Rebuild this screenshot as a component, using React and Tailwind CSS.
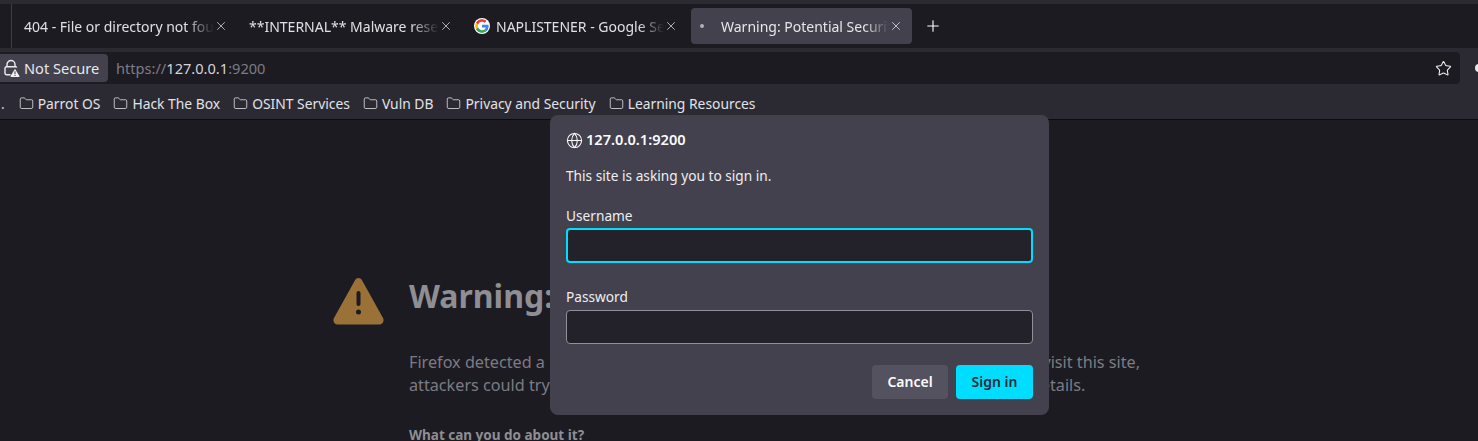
import React from 'react';
import { X, Plus, Star, Folder, Globe } from 'lucide-react';

const fade = '[mask-image:linear-gradient(to_right,black_85%,transparent_100%)]';

const GoogleIcon = () => (
  <svg width="16" height="16" viewBox="0 0 48 48" className="shrink-0 rounded-full bg-white p-px">
    <path fill="#EA4335" d="M24 9.500c3.500 0 6.700 1.200 9.200 3.600l6.900-6.900C35.900 2.400 30.500 0 24 0 14.600 0 6.500 5.400 2.600 13.200l8 6.200C12.500 13.700 17.800 9.500 24 9.500z" />
    <path fill="#4285F4" d="M46.900 24.500c0-1.600-.1-3.100-.4-4.500H24v9h12.900c-.6 3-2.200 5.500-4.700 7.200l7.700 6c4.500-4.200 7-10.300 7-17.700z" />
    <path fill="#FBBC05" d="M10.500 28.600c-.5-1.500-.8-3-.8-4.600s.3-3.100.8-4.600l-8-6.200C.9 16.500 0 20.100 0 24s.9 7.500 2.600 10.800l7.900-6.200z" />
    <path fill="#34A853" d="M24 48c6.500 0 11.900-2.100 15.900-5.800l-7.700-6c-2.200 1.500-4.900 2.300-8.200 2.300-6.200 0-11.500-4.200-13.400-9.900l-8 6.200C6.500 42.600 14.600 48 24 48z" />
  </svg>
);

// padlock with the small warning triangle on its corner
const InsecureLock = () => (
  <svg width="18" height="18" viewBox="0 0 18 18" className="shrink-0">
    <path d="M5 8V5.500a4 4 0 0 1 8 0V8" fill="none" stroke="#eeeeee" strokeWidth="1.4" />
    <path d="M8.500 15.800H4.500a1.500 1.500 0 0 1-1.500-1.500V9.200a1.500 1.500 0 0 1 1.500-1.500h9a1.500 1.500 0 0 1 1.300.8" fill="none" stroke="#eeeeee" strokeWidth="1.400" />
    <path d="M13 9.800l4.400 7.200a.6.6 0 0 1-.5.9H9.100a.6.6 0 0 1-.5-.9z" fill="#f2f2f2" />
    <rect x="12.500" y="12.300" width="1" height="3" fill="#42414d" />
    <rect x="12.500" y="16" width="1" height="1" fill="#42414d" />
  </svg>
);

const tabs = [
  { title: '404 - File or directory not found' },
  { title: '**INTERNAL** Malware research notes' },
  { title: 'NAPLISTENER - Google Search', google: true },
];

const bookmarks = ['Parrot OS', 'Hack The Box', 'OSINT Services', 'Vuln DB', 'Privacy and Security', 'Learning Resources'];

const App = () => {
  return (
    <div className="relative h-[441px] w-[1478px] overflow-hidden bg-[#1c1b22] font-['Noto_Sans',sans-serif]">
      {/* tab strip */}
      <div className="mt-1 flex h-11 items-center bg-[#1c1b22] pl-[14px] shadow-[0_-4px_0_#2b2a33]">
        <div className="absolute left-[11px] top-1 h-11 w-px bg-[#3f3e48]" />
        {tabs.map((tab) => (
          <div key={tab.title} className="flex h-9 w-[225px] shrink-0 items-center pl-[10px] text-[14px] text-[#e0e0e3]">
            {tab.google && <span className="mr-[6px]"><GoogleIcon /></span>}
            <span className={`${tab.google ? 'w-[168px]' : 'w-[190px]'} overflow-hidden whitespace-nowrap ${fade}`}>{tab.title}</span>
            <X size={14} strokeWidth={1.25} className="shrink-0 text-[#e6e6e8]" />
          </div>
        ))}
        <div className="ml-[2px] flex h-9 w-[221px] shrink-0 items-center rounded bg-[#42414d] text-[14px] text-[#e6e6ea]">
          <span className="ml-[9px] mr-[17px] h-1 w-1 shrink-0 rounded-full bg-[#b0b0b8]" />
          <span className={`w-[168px] overflow-hidden whitespace-nowrap ${fade}`}>Warning: Potential Security Risk Ahead</span>
          <X size={14} strokeWidth={1.25} className="shrink-0 text-[#f0f0f2]" />
        </div>
        <Plus size={18} strokeWidth={1.5} className="ml-3 text-white" />
      </div>

      {/* url row */}
      <div className="flex h-[36px] items-center bg-[#2b2a33] pt-1">
        <div className="flex h-8 w-[1460px] shrink-0 items-center rounded-r bg-[#1c1b22]">
          <div className="flex h-7 w-[108px] items-center gap-[4px] rounded-r bg-[#42414d] pl-[2px] text-[14.6px] text-[#e8e8ea]">
            <InsecureLock />
            <span className="pt-px">Not Secure</span>
          </div>
          <div className="ml-2 flex-1 pt-px text-[14.6px] text-[#7d7c84]">
            https://<span className="text-[#d5d5d9]">127.0.0.1</span>:9200
          </div>
          <Star size={17} strokeWidth={1.5} className="mr-2 text-[#f2f2f2]" />
        </div>
        <div className="ml-[15px] h-2 w-2 shrink-0 rounded-full bg-[#e8e8e8]" />
      </div>

      {/* bookmarks */}
      <div className="flex h-9 items-center border-b border-[#0c0c0f] bg-[#2b2a33] pl-[1px] pt-[5px] text-[13.85px] text-[#e2e2e6]">
        <span className="mr-[14px] text-[#d0d0d4]">.</span>
        {bookmarks.map((name) => (
          <div key={name} className="mr-[13px] flex items-center gap-1">
            <Folder size={15} strokeWidth={1.25} className="shrink-0 text-[#e6e6ea]" />
            <span>{name}</span>
          </div>
        ))}
      </div>

      {/* error page */}
      <div className="flex pl-[333px] pt-[157px]">
        <svg width="51" height="47" viewBox="0 0 51 47" className="mt-[1px] shrink-0">
          <path fill="#9a7238" d="M22 2.200c1.600-2.900 5.400-2.900 7 0l21 37.800c1.600 3-.4 6.500-3.800 6.500H4.800C1.400 46.500-.6 43 1 40L22 2.200z" />
          <path d="M25.500 15v11" stroke="#1c1b22" strokeWidth="4" strokeLinecap="round" />
          <circle cx="25.500" cy="34" r="2.500" fill="#1c1b22" />
        </svg>
        <div className="ml-[25px] w-[760px]">
          <h1 className="text-[32px] font-bold leading-[38px] text-[#8e8e94]">Warning: Potential Security Risk Ahead</h1>
          <p className="mt-[36px] text-[16.2px] leading-[23px] text-[#7c7b83]">
            Firefox detected a potential security threat and did not continue to 127.0.0.1. If you visit this site,
            <br />
            attackers could try to steal information like your passwords, emails, or credit card details.
          </p>
          <p className="mt-[28px] text-[13.5px] font-bold leading-5 text-[#8e8e94]">What can you do about it?</p>
        </div>
      </div>

      {/* sign in dialog */}
      <div className="absolute left-[550px] top-[115px] flex h-[300px] w-[499px] flex-col rounded-lg bg-[#42414d] px-4 text-[13.7px] text-[#eeeef0]">
        <div className="mt-[15px] flex h-5 items-center gap-[3px] text-[14.6px] font-semibold text-[#fbfbfe]">
          <Globe size={17} strokeWidth={1.5} className="shrink-0" />
          <span>127.0.0.1:9200</span>
        </div>
        <p className="mt-[16px] leading-5">This site is asking you to sign in.</p>
        <label className="mt-[20px] leading-5">Username</label>
        <div className="mt-[2px] h-[35px] rounded border-2 border-[#00ddff] bg-[#23222b]" />
        <label className="mt-[24px] leading-5">Password</label>
        <div className="mt-[3px] h-[34px] rounded border border-[#8f8f9d] bg-[#23222b]" />
        <div className="mt-[21px] flex justify-end gap-2 text-[14px]">
          <button className="h-[34px] w-[76px] rounded bg-[#53525e] pb-[2px] font-semibold text-[#fbfbfe]">Cancel</button>
          <button className="h-[34px] w-[77px] rounded bg-[#00ddff] pb-[2px] font-semibold text-[#2b2a33]">Sign in</button>
        </div>
      </div>
    </div>
  );
};

export default App;
